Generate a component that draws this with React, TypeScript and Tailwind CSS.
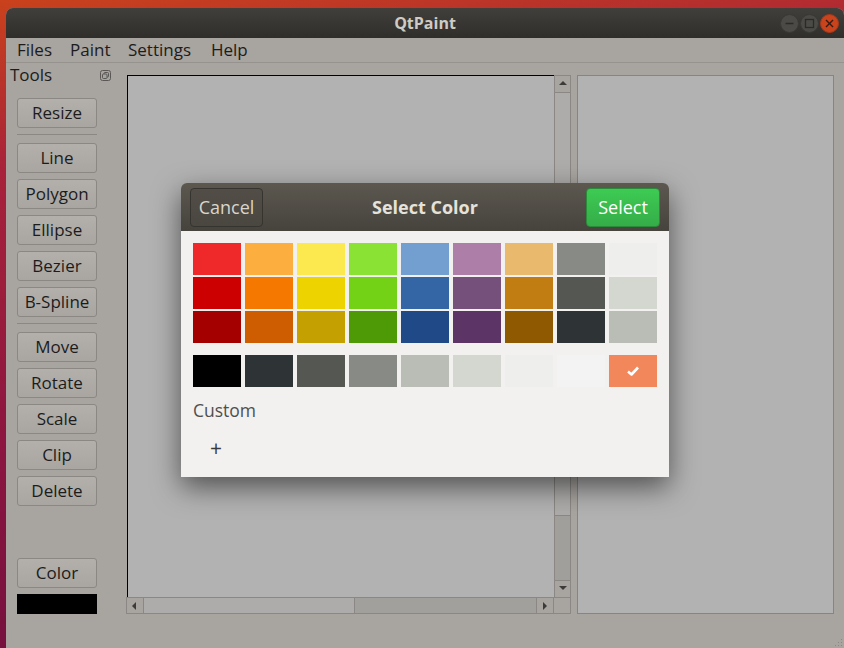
import React from 'react';

const font = { fontFamily: '"Open Sans", "DejaVu Sans", sans-serif' };

const rows: string[][] = [
  ['#ef2929', '#fcaf3e', '#fce94f', '#8ae234', '#729fcf', '#ad7fa8', '#e9b96e', '#888a85', '#eeeeec'],
  ['#cc0000', '#f57900', '#edd400', '#73d216', '#3465a4', '#75507b', '#c17d11', '#555753', '#d3d7cf'],
  ['#a40000', '#ce5c00', '#c4a000', '#4e9a06', '#204a87', '#5c3566', '#8f5902', '#2e3436', '#babdb6'],
];

const grays = ['#000000', '#2e3436', '#555753', '#888a85', '#babdb6', '#d3d7cf', '#eeeeec', '#f3f3f3', '#f2875b'];

const ToolButton: React.FC<{ label: string; className?: string }> = ({ label, className = '' }) => (
  <div
    className={`w-[80px] h-[30px] flex items-center justify-center rounded-[3px] border border-[#8b8884] bg-[linear-gradient(#b3b0ac,#a9a6a2)] text-[17px] text-[#1c1c1c] ${className}`}
  >
    {label}
  </div>
);

const Separator: React.FC = () => <div className="w-[80px] h-px bg-[#8b8884] mt-[6px] mb-[8px]" />;

const Arrow: React.FC<{ dir: 'up' | 'down' | 'left' | 'right' }> = ({ dir }) => {
  const pts = {
    up: '1,6 5,2 9,6',
    down: '1,2 5,6 9,2',
    left: '6,1 2,5 6,9',
    right: '3,1 7,5 3,9',
  }[dir];
  return (
    <svg width="10" height="10" viewBox="0 0 10 10">
      <polygon points={pts} fill="#3c3b3a" />
    </svg>
  );
};

const TitleButton: React.FC<{ kind: 'min' | 'max' | 'close' }> = ({ kind }) => (
  <svg width="19" height="19" viewBox="0 0 19 19">
    <circle cx="9.5" cy="9.5" r="9" fill={kind === 'close' ? '#c9441c' : '#4b4a46'} stroke={kind === 'close' ? '#a8391a' : '#3a3936'} />
    {kind === 'min' && <line x1="5.5" y1="9.5" x2="13.5" y2="9.5" stroke="#2b2a28" strokeWidth="1.4" />}
    {kind === 'max' && <rect x="5.5" y="5.5" width="8" height="8" fill="none" stroke="#2b2a28" strokeWidth="1.3" />}
    {kind === 'close' && (
      <g stroke="#3a1a10" strokeWidth="1.4">
        <line x1="6" y1="6" x2="13" y2="13" />
        <line x1="13" y1="6" x2="6" y2="13" />
      </g>
    )}
  </svg>
);

export default function App() {
  return (
    <div
      className="relative w-[844px] h-[648px] overflow-hidden pt-[8px] pl-[6px] flex flex-col bg-[linear-gradient(172deg,#c9421c_0%,#a8223a_22%,#8a1540_60%,#6a0e3c_100%)]"
      style={font}
    >
      <div className="flex-1 flex flex-col rounded-t-[7px] overflow-hidden bg-[#a8a4a0]">
        {/* title bar */}
        <div className="h-[30px] shrink-0 grid grid-cols-[1fr_auto_1fr] items-center bg-[linear-gradient(#403f3b,#2f2e2b)]">
          <div />
          <div className="text-[16px] font-bold text-[#cfcbc4]">QtPaint</div>
          <div className="flex justify-end items-center gap-[1px] pr-[5px]">
            <TitleButton kind="min" />
            <TitleButton kind="max" />
            <TitleButton kind="close" />
          </div>
        </div>

        {/* menu bar */}
        <div className="h-[25px] shrink-0 flex items-center pl-[11px] border-b border-[#96928e] text-[17px] text-[#1c1c1c]">
          <span className="w-[53px]">Files</span>
          <span className="w-[58px]">Paint</span>
          <span className="w-[83px]">Settings</span>
          <span>Help</span>
        </div>

        {/* main */}
        <div className="flex-1 flex relative">
          {/* tools dock */}
          <div className="w-[120px] shrink-0 flex flex-col">
            <div className="h-[24px] flex items-center justify-between pl-[4px] pr-[15px] text-[17px] text-[#1c1c1c]">
              <span>Tools</span>
              <svg width="11" height="11" viewBox="0 0 11 11">
                <rect x="0.5" y="0.5" width="10" height="10" rx="2" fill="none" stroke="#5a5856" />
                <rect x="4" y="2.5" width="4.5" height="4.5" rx="1" fill="none" stroke="#5a5856" />
                <rect x="2.5" y="4" width="4.5" height="4.5" rx="1" fill="#a8a4a0" stroke="#5a5856" />
              </svg>
            </div>
            <div className="pl-[11px] mt-[11px] flex flex-col">
              <ToolButton label="Resize" />
              <Separator />
              <div className="flex flex-col gap-[6px]">
                <ToolButton label="Line" />
                <ToolButton label="Polygon" />
                <ToolButton label="Ellipse" />
                <ToolButton label="Bezier" />
                <ToolButton label="B-Spline" />
              </div>
              <Separator />
              <div className="flex flex-col gap-[6px]">
                <ToolButton label="Move" />
                <ToolButton label="Rotate" />
                <ToolButton label="Scale" />
                <ToolButton label="Clip" />
                <ToolButton label="Delete" />
              </div>
              <ToolButton label="Color" className="mt-[52px]" />
              <div className="w-[80px] h-[20px] bg-black mt-[6px]" />
            </div>
          </div>

          {/* canvas scroll area */}
          <div className="mt-[12px] w-[445px] h-[539px] grid grid-cols-[1fr_17px] grid-rows-[1fr_17px]">
            <div className="border-l border-t border-black bg-[#b2b2b2] ml-px" />
            <div className="flex flex-col border-x border-t border-[#8a8784]">
              <div className="h-[17px] flex items-center justify-center border-b border-[#8a8784]">
                <Arrow dir="up" />
              </div>
              <div className="flex-1 bg-[#adacaa]" />
              <div className="h-[65px] bg-[#a19f9b] border-t border-[#8a8784]" />
              <div className="h-[17px] flex items-center justify-center border-t border-[#8a8784]">
                <Arrow dir="down" />
              </div>
            </div>
            <div className="flex border border-[#8a8784]">
              <div className="w-[17px] flex items-center justify-center border-r border-[#8a8784]">
                <Arrow dir="left" />
              </div>
              <div className="w-[210px] bg-[#adacaa]" />
              <div className="flex-1 bg-[#a2a09c] border-l border-[#8a8784]" />
              <div className="w-[17px] flex items-center justify-center border-l border-[#8a8784]">
                <Arrow dir="right" />
              </div>
            </div>
            <div className="border border-l-0 border-[#8a8784]" />
          </div>

          {/* right panel */}
          <div className="mt-[12px] ml-[6px] w-[257px] h-[539px] border border-[#878583] bg-[#b2b2b2]" />

          {/* resize grip */}
          <svg className="absolute right-[1px] bottom-[1px]" width="9" height="9" viewBox="0 0 9 9">
            <g fill="#8a8784">
              <rect x="7" y="1" width="1" height="1" />
              <rect x="4" y="4" width="1" height="1" />
              <rect x="7" y="4" width="1" height="1" />
              <rect x="1" y="7" width="1" height="1" />
              <rect x="4" y="7" width="1" height="1" />
              <rect x="7" y="7" width="1" height="1" />
            </g>
          </svg>
        </div>
      </div>

      {/* select color dialog */}
      <div className="absolute left-[181px] top-[183px] w-[488px] h-[294px] flex flex-col rounded-t-[6px] shadow-[0_10px_28px_rgba(0,0,0,0.55)]">
        <div className="h-[48px] shrink-0 rounded-t-[6px] grid grid-cols-[1fr_auto_1fr] items-center px-[9px] bg-[linear-gradient(#5c5850,#46433d)]">
          <div>
            <div className="w-[73px] h-[39px] rounded-[4px] border border-[#36342f] bg-[linear-gradient(#524e47,#4a4640)] flex items-center justify-center text-[18px] text-[#d9d5cd]">
              Cancel
            </div>
          </div>
          <div className="text-[18px] font-bold text-[#e6e2da]">Select Color</div>
          <div className="flex justify-end">
            <div className="w-[74px] h-[39px] rounded-[4px] border border-[#2c8a3b] bg-[linear-gradient(#3dcb53,#35ad48)] flex items-center justify-center text-[18px] text-white">
              Select
            </div>
          </div>
        </div>
        <div className="flex-1 bg-[#f2f1f0] pl-[12px] pt-[12px]">
          <div className="flex flex-col gap-[2px]">
            {rows.map((row, i) => (
              <div key={i} className="flex gap-[4px]">
                {row.map((c, j) => (
                  <div key={j} className="w-[48px] h-[32px]" style={{ backgroundColor: c }} />
                ))}
              </div>
            ))}
          </div>
          <div className="flex gap-[4px] mt-[12px]">
            {grays.map((c, j) => (
              <div key={j} className="w-[48px] h-[32px] flex items-center justify-center" style={{ backgroundColor: c }}>
                {j === grays.length - 1 && (
                  <svg width="12" height="10" viewBox="0 0 12 10">
                    <path d="M1 5.5 L4.5 8.5 L11 1.5" fill="none" stroke="#ffffff" strokeWidth="2.6" strokeLinejoin="round" />
                  </svg>
                )}
              </div>
            ))}
          </div>
          <div className="mt-[12px] text-[17.5px] text-[#4f4f4f] leading-[22px]">Custom</div>
          <div className="mt-[17px] ml-[17px] text-[21px] leading-[20px] text-[#3a3a3a]">+</div>
        </div>
      </div>
    </div>
  );
}
